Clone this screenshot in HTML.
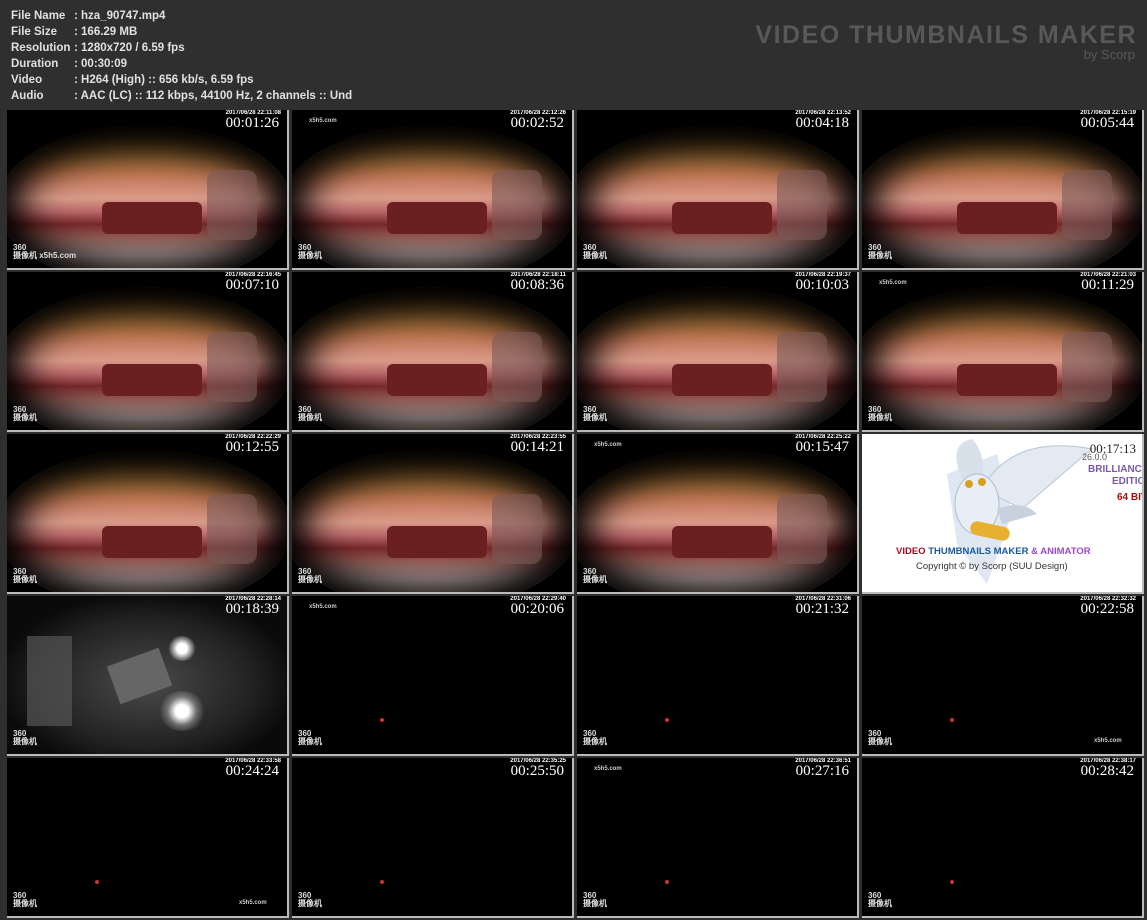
<!DOCTYPE html>
<html><head><meta charset="utf-8"><style>
*{margin:0;padding:0;box-sizing:border-box}
body{width:1147px;height:920px;background:#2f2f2f;position:relative;overflow:hidden;font-family:"Liberation Sans",sans-serif}
.info{position:absolute;left:11px;top:8px;color:#e0e0e0;font-weight:bold;font-size:11.5px;line-height:16px}
.info div{white-space:nowrap}
.info span{display:inline-block;width:63px}
.brand{position:absolute;right:10px;top:21px;text-align:right;color:#585858}
.brand b{display:block;font-size:25px;font-weight:900;letter-spacing:1.5px;line-height:28px}
.brand i{display:block;font-style:normal;font-size:13px;line-height:12px;margin-right:2px}
.c{position:absolute;width:280px;height:158px;background:#000;overflow:hidden}
.sh{position:absolute;width:282px;height:160px;border-right:2px solid #bbb;border-bottom:2px solid #bbb}
.oval{position:absolute;left:-10px;top:15px;width:295px;height:160px;border-radius:50%;
background:linear-gradient(to bottom,#2a1a08 0%,#6a4a20 12%,#9a6a38 22%,#c07850 30%,#d08870 38%,#d89a88 46%,#b86868 54%,#7a2a2a 62%,#9a6058 70%,#b0a0a0 82%,#a89070 100%);
box-shadow:inset 0 0 35px 22px #000}
.sofa{position:absolute;left:95px;top:92px;width:100px;height:32px;background:#6a2020;border-radius:6px}
.wall{position:absolute;left:200px;top:60px;width:50px;height:70px;background:#7a5a58;opacity:.6;border-radius:10px}
.t{position:absolute;right:8px;top:6px;color:#fff;font-family:"Liberation Serif",serif;font-size:15px;line-height:15px}
.d{position:absolute;right:6px;top:0px;color:#fff;font-size:6px;font-weight:bold;line-height:7px}
.l{position:absolute;left:6px;bottom:8px;color:#ddd;font-size:8px;font-weight:bold;line-height:8px}
.x{position:absolute;color:#ccc;font-size:6px;font-weight:bold}
.dot{position:absolute;width:4px;height:4px;border-radius:50%;background:#c33}
</style></head><body>
<div class="info">
<div><span>File Name</span>: hza_90747.mp4</div>
<div><span>File Size</span>: 166.29 MB</div>
<div><span>Resolution</span>: 1280x720 / 6.59 fps</div>
<div><span>Duration</span>: 00:30:09</div>
<div><span>Video</span>: H264 (High) :: 656 kb/s, 6.59 fps</div>
<div><span>Audio</span>: AAC (LC) :: 112 kbps, 44100 Hz, 2 channels :: Und</div>
</div>
<div class="brand"><b>VIDEO THUMBNAILS MAKER</b><i>by Scorp</i></div>

<!-- row 1 -->
<div class="sh" style="left:7px;top:110px"></div><div class="c" style="left:7px;top:110px"><div class="oval"></div><div class="wall"></div><div class="sofa"></div><div class="d">2017/06/28 22:11:08</div><div class="t">00:01:26</div><div class="l">360<br>摄像机 x5h5.com</div></div>
<div class="sh" style="left:292px;top:110px"></div><div class="c" style="left:292px;top:110px"><div class="oval"></div><div class="wall"></div><div class="sofa"></div><div class="x" style="left:17px;top:8px">x5h5.com</div><div class="d">2017/06/28 22:12:26</div><div class="t">00:02:52</div><div class="l">360<br>摄像机</div></div>
<div class="sh" style="left:577px;top:110px"></div><div class="c" style="left:577px;top:110px"><div class="oval"></div><div class="wall"></div><div class="sofa"></div><div class="d">2017/06/28 22:13:52</div><div class="t">00:04:18</div><div class="l">360<br>摄像机</div></div>
<div class="sh" style="left:862px;top:110px"></div><div class="c" style="left:862px;top:110px"><div class="oval"></div><div class="wall"></div><div class="sofa"></div><div class="d">2017/06/28 22:15:19</div><div class="t">00:05:44</div><div class="l">360<br>摄像机</div></div>
<!-- row 2 -->
<div class="sh" style="left:7px;top:272px"></div><div class="c" style="left:7px;top:272px"><div class="oval"></div><div class="wall"></div><div class="sofa"></div><div class="d">2017/06/28 22:16:45</div><div class="t">00:07:10</div><div class="l">360<br>摄像机</div></div>
<div class="sh" style="left:292px;top:272px"></div><div class="c" style="left:292px;top:272px"><div class="oval"></div><div class="wall"></div><div class="sofa"></div><div class="d">2017/06/28 22:18:11</div><div class="t">00:08:36</div><div class="l">360<br>摄像机</div></div>
<div class="sh" style="left:577px;top:272px"></div><div class="c" style="left:577px;top:272px"><div class="oval"></div><div class="wall"></div><div class="sofa"></div><div class="d">2017/06/28 22:19:37</div><div class="t">00:10:03</div><div class="l">360<br>摄像机</div></div>
<div class="sh" style="left:862px;top:272px"></div><div class="c" style="left:862px;top:272px"><div class="oval"></div><div class="wall"></div><div class="sofa"></div><div class="x" style="left:17px;top:8px">x5h5.com</div><div class="d">2017/06/28 22:21:03</div><div class="t">00:11:29</div><div class="l">360<br>摄像机</div></div>
<!-- row 3 -->
<div class="sh" style="left:7px;top:434px"></div><div class="c" style="left:7px;top:434px"><div class="oval"></div><div class="wall"></div><div class="sofa"></div><div class="d">2017/06/28 22:22:29</div><div class="t">00:12:55</div><div class="l">360<br>摄像机</div></div>
<div class="sh" style="left:292px;top:434px"></div><div class="c" style="left:292px;top:434px"><div class="oval"></div><div class="wall"></div><div class="sofa"></div><div class="d">2017/06/28 22:23:55</div><div class="t">00:14:21</div><div class="l">360<br>摄像机</div></div>
<div class="sh" style="left:577px;top:434px"></div><div class="c" style="left:577px;top:434px"><div class="oval"></div><div class="wall"></div><div class="sofa"></div><div class="x" style="left:17px;top:8px">x5h5.com</div><div class="d">2017/06/28 22:25:22</div><div class="t">00:15:47</div><div class="l">360<br>摄像机</div></div>
<div class="sh" style="left:862px;top:434px"></div><div class="c" style="left:862px;top:434px;background:#fff">
<svg width="280" height="158" style="position:absolute;left:0;top:0">
<path d="M85 40 L135 20 L150 80 L125 150 L95 110 Z" fill="#dfe8f2"/>
<path d="M100 45 Q85 10 110 5 Q125 20 120 50 Z" fill="#d8e0ea"/>
<path d="M120 55 Q150 0 230 15 Q200 40 160 75 Z" fill="#e4eaf2" stroke="#b8c4d4"/>
<ellipse cx="115" cy="70" rx="22" ry="30" fill="#e8eef6" stroke="#b0bccc"/>
<circle cx="107" cy="50" r="4" fill="#d9a020"/><circle cx="120" cy="48" r="4" fill="#d9a020"/>
<path d="M135 75 Q160 65 175 80 L140 90 Z" fill="#c8d2de"/>
<rect x="108" y="90" width="40" height="14" rx="7" fill="#e8b030" transform="rotate(12 128 97)"/>
</svg>
<div style="position:absolute;right:6px;top:7px;color:#222;font-family:'Liberation Serif',serif;font-size:13px">00:17:13</div>
<div style="position:absolute;left:220px;top:18px;color:#555;font-size:9px">26.0.0</div>
<div style="position:absolute;left:226px;top:30px;color:#7a5aa8;font-size:10px;font-weight:bold;white-space:nowrap">BRILLIANCE</div>
<div style="position:absolute;left:250px;top:42px;color:#7a5aa8;font-size:10px;font-weight:bold;white-space:nowrap">EDITION</div>
<div style="position:absolute;left:255px;top:58px;color:#a01010;font-size:10px;font-weight:bold;white-space:nowrap">64 BIT</div>
<div style="position:absolute;left:34px;top:112px;font-size:9.5px;font-weight:bold;white-space:nowrap"><span style="color:#a01020">VIDEO</span> <span style="color:#1a5a9a">THUMBNAILS MAKER</span> <span style="color:#9a4ac8">&amp; ANIMATOR</span></div>
<div style="position:absolute;left:54px;top:127px;font-size:9.5px;color:#333;white-space:nowrap">Copyright © by Scorp (SUU Design)</div>
</div>
<!-- row 4 -->
<div class="sh" style="left:7px;top:596px"></div><div class="c" style="left:7px;top:596px;background:radial-gradient(ellipse 150px 90px at 50% 55%,#4a4a4a,#222 70%,#0a0a0a)">
<div style="position:absolute;left:150px;top:95px;width:50px;height:40px;border-radius:50%;background:radial-gradient(circle,#fff 20%,rgba(255,255,255,.3) 45%,transparent 70%)"></div>
<div style="position:absolute;left:160px;top:40px;width:30px;height:25px;border-radius:50%;background:radial-gradient(circle,#fff 25%,transparent 70%)"></div>
<div style="position:absolute;left:105px;top:60px;width:55px;height:40px;background:#666;transform:rotate(-20deg)"></div>
<div style="position:absolute;left:20px;top:40px;width:45px;height:90px;background:#555;opacity:.7"></div>
<div class="d">2017/06/28 22:28:14</div><div class="t">00:18:39</div><div class="l">360<br>摄像机</div></div>
<div class="sh" style="left:292px;top:596px"></div><div class="c" style="left:292px;top:596px"><div class="x" style="left:17px;top:8px">x5h5.com</div><div class="dot" style="left:88px;top:122px"></div><div class="d">2017/06/28 22:29:40</div><div class="t">00:20:06</div><div class="l">360<br>摄像机</div></div>
<div class="sh" style="left:577px;top:596px"></div><div class="c" style="left:577px;top:596px"><div class="dot" style="left:88px;top:122px"></div><div class="d">2017/06/28 22:31:06</div><div class="t">00:21:32</div><div class="l">360<br>摄像机</div></div>
<div class="sh" style="left:862px;top:596px"></div><div class="c" style="left:862px;top:596px"><div class="dot" style="left:88px;top:122px"></div><div class="d">2017/06/28 22:32:32</div><div class="t">00:22:58</div><div class="l">360<br>摄像机</div><div class="x" style="left:232px;top:142px">x5h5.com</div></div>
<!-- row 5 -->
<div class="sh" style="left:7px;top:758px"></div><div class="c" style="left:7px;top:758px"><div class="dot" style="left:88px;top:122px"></div><div class="d">2017/06/28 22:33:58</div><div class="t">00:24:24</div><div class="l">360<br>摄像机</div><div class="x" style="left:232px;top:142px">x5h5.com</div></div>
<div class="sh" style="left:292px;top:758px"></div><div class="c" style="left:292px;top:758px"><div class="dot" style="left:88px;top:122px"></div><div class="d">2017/06/28 22:35:25</div><div class="t">00:25:50</div><div class="l">360<br>摄像机</div></div>
<div class="sh" style="left:577px;top:758px"></div><div class="c" style="left:577px;top:758px"><div class="x" style="left:17px;top:8px">x5h5.com</div><div class="dot" style="left:88px;top:122px"></div><div class="d">2017/06/28 22:36:51</div><div class="t">00:27:16</div><div class="l">360<br>摄像机</div></div>
<div class="sh" style="left:862px;top:758px"></div><div class="c" style="left:862px;top:758px"><div class="dot" style="left:88px;top:122px"></div><div class="d">2017/06/28 22:38:17</div><div class="t">00:28:42</div><div class="l">360<br>摄像机</div></div>
</body></html>
